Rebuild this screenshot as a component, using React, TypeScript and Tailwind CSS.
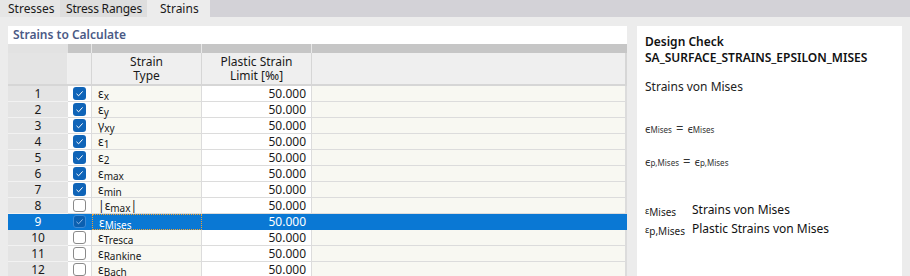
import React from 'react';

type StrainRow = {
  id: number;
  checked: boolean;
  base: string;
  sub: string;
  abs?: boolean;
};

const rows: StrainRow[] = [
  { id: 1, checked: true, base: 'ε', sub: 'x' },
  { id: 2, checked: true, base: 'ε', sub: 'y' },
  { id: 3, checked: true, base: 'γ', sub: 'xy' },
  { id: 4, checked: true, base: 'ε', sub: '1' },
  { id: 5, checked: true, base: 'ε', sub: '2' },
  { id: 6, checked: true, base: 'ε', sub: 'max' },
  { id: 7, checked: true, base: 'ε', sub: 'min' },
  { id: 8, checked: false, base: 'ε', sub: 'max', abs: true },
  { id: 9, checked: true, base: 'ε', sub: 'Mises' },
  { id: 10, checked: false, base: 'ε', sub: 'Tresca' },
  { id: 11, checked: false, base: 'ε', sub: 'Rankine' },
  { id: 12, checked: false, base: 'ε', sub: 'Bach' },
];

const SELECTED = 9;

const CheckBox: React.FC<{ checked: boolean; selected: boolean }> = ({ checked, selected }) => {
  if (checked) {
    return (
      <span
        className={`flex h-[13px] w-[13px] items-center justify-center rounded-[3px] ${
          selected ? 'bg-[#0a5fb0] border border-[#3c8ad6]' : 'bg-[#0f64b8]'
        }`}
      >
        <svg width="9" height="9" viewBox="0 0 9 9" fill="none">
          <path d="M1.5 4.8 L3.6 6.8 L7.6 2.4" stroke={selected ? '#8fb9e6' : '#ffffff'} strokeWidth="1" />
        </svg>
      </span>
    );
  }
  return <span className="block h-[13px] w-[13px] rounded-[3px] border border-[#8a8a8a] bg-white" />;
};

const Symbol: React.FC<{ base: string; sub: string; abs?: boolean }> = ({ base, sub, abs }) => (
  <span className="whitespace-nowrap">
    {abs && '|'}
    {base}
    <span className="text-[10px] relative top-[2px]">{sub}</span>
    {abs && '|'}
  </span>
);

export default function App() {
  return (
    <div
      className="w-[910px] h-[276px] overflow-hidden bg-[#ececec] text-[12px] text-[#1a1a1a]"
      style={{ fontFamily: '"Noto Sans", "Open Sans", sans-serif' }}
    >
      {/* Tabs */}
      <div className="flex h-[17px] bg-[#d3d2d7] leading-[17px] whitespace-nowrap">
        <div className="w-[60px] bg-[#e6e6e6] pl-[8px]">Stresses</div>
        <div className="w-[87px] bg-[#dedede] pl-[6px] tracking-[-0.2px]">Stress Ranges</div>
        <div className="w-[63px] bg-[#ececec] pl-[13px]">Strains</div>
      </div>

      <div className="flex pt-[9px]">
        {/* Left panel */}
        <div className="ml-[8px] w-[619px] h-[250px] overflow-hidden bg-white">
          <div className="h-[18px] pl-[5px] leading-[18px] font-semibold text-[#4b5a86]">Strains to Calculate</div>

          {/* header band */}
          <div className="flex h-[9px]">
            <div className="w-[60px] bg-[#e2e2e2]" />
            <div className="w-[24px] bg-[#c6c6c6] border-r border-[#e8e8e8]" />
            <div className="w-[110px] bg-[#c6c6c6] border-r border-[#e8e8e8]" />
            <div className="w-[110px] bg-[#c6c6c6] border-r border-[#e8e8e8]" />
            <div className="flex-1 bg-[#c6c6c6]" />
          </div>

          {/* header cells */}
          <div className="flex h-[33px] border-b-2 border-[#d6d6d6] leading-[14px]">
            <div className="w-[60px] bg-[#e4e4e4] border-r border-[#f0f0f0]" />
            <div className="w-[24px] bg-[#efefef] border-r border-[#d6d6d6]" />
            <div className="w-[110px] bg-[#efefef] border-r border-[#d6d6d6] flex flex-col items-center justify-center">
              <span>Strain</span>
              <span>Type</span>
            </div>
            <div className="w-[110px] bg-[#efefef] border-r border-[#d6d6d6] flex flex-col items-center justify-center">
              <span>Plastic Strain</span>
              <span>Limit [‰]</span>
            </div>
            <div className="flex-1 bg-[#efefef] border-r-2 border-[#d6d6d6]" />
          </div>

          {/* rows */}
          {rows.map((r) => {
            const sel = r.id === SELECTED;
            return (
              <div key={r.id} className={`flex h-[16px] leading-[15px] ${sel ? 'bg-[#0a78d4] text-white' : ''}`}>
                <div
                  className={`w-[60px] text-center border-b ${
                    sel ? 'border-[#0a78d4]' : 'bg-[#e4e4e4] border-[#f2f2f2]'
                  }`}
                >
                  {r.id}
                </div>
                <div
                  className={`w-[24px] flex items-center justify-center border-b border-r ${
                    sel ? 'border-[#0a78d4]' : 'bg-white border-[#dcdcdc]'
                  }`}
                >
                  <CheckBox checked={r.checked} selected={sel} />
                </div>
                <div
                  className={`w-[110px] pl-[6px] ${
                    sel
                      ? 'border border-dotted border-[#f0a030]'
                      : 'bg-[#f8f8f2] border-b border-r border-[#dcdcdc]'
                  }`}
                >
                  <Symbol base={r.base} sub={r.sub} abs={r.abs} />
                </div>
                <div
                  className={`w-[110px] text-right pr-[5px] border-b border-r ${
                    sel ? 'border-[#0a78d4]' : 'bg-white border-[#dcdcdc]'
                  }`}
                >
                  50.000
                </div>
                <div
                  className={`flex-1 border-b border-r-2 ${sel ? 'border-[#0a78d4]' : 'bg-[#f8f8f2] border-[#dcdcdc]'}`}
                />
              </div>
            );
          })}
        </div>

        {/* Right panel */}
        <div className="ml-[10px] w-[265px] h-[250px] bg-white pl-[8px] pt-[8px] text-[#111]">
          <div className="font-semibold leading-[16px]">Design Check</div>
          <div className="font-semibold leading-[16px]">SA_SURFACE_STRAINS_EPSILON_MISES</div>
          <div className="mt-[13px] leading-[16px] text-[#222]">Strains von Mises</div>

          <div className="mt-[26px] text-[11px] text-[#333] leading-[14px]">
            <span>ϵ</span>
            <span className="text-[8px]">Mises</span>
            <span className="mx-[4px] text-[13px]">=</span>
            <span>ϵ</span>
            <span className="text-[8px]">Mises</span>
          </div>

          <div className="mt-[17px] text-[11px] text-[#333] leading-[14px]">
            <span>ϵ</span>
            <span className="text-[8px]">p,Mises</span>
            <span className="mx-[4px] text-[13px]">=</span>
            <span>ϵ</span>
            <span className="text-[8px]">p,Mises</span>
          </div>

          <div className="mt-[32px] flex flex-col gap-[2px] leading-[16px]">
            <div className="flex">
              <div className="w-[47px] text-[#222]">
                <span className="text-[9px]">ε</span>
                <span className="text-[10px] relative top-[2px]">Mises</span>
              </div>
              <div>Strains von Mises</div>
            </div>
            <div className="flex">
              <div className="w-[47px] text-[#222]">
                <span className="text-[9px]">ε</span>
                <span className="text-[10px] relative top-[2px]">p,Mises</span>
              </div>
              <div>Plastic Strains von Mises</div>
            </div>
          </div>
        </div>
      </div>
    </div>
  );
}
